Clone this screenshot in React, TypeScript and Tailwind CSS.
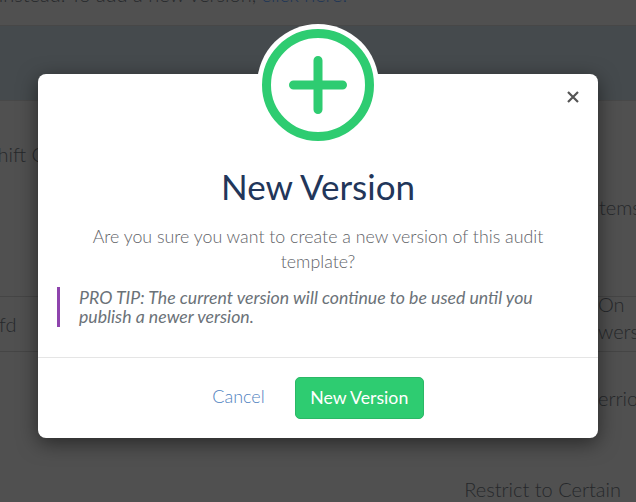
export default function App() {
  return (
    <div className="relative w-[636px] h-[502px] overflow-hidden bg-[#505050] font-['Lato',sans-serif] text-[20px] leading-[26px] text-[#26282b] font-light">
      <div className="h-[26px] border-b border-[#474747] overflow-hidden">
        <p className="mt-[-19px] whitespace-nowrap text-center w-[700px] ml-[-177px]">instead. To add a new version, <span className="text-[#1d3557]">click here.</span></p>
      </div>
      <div className="h-[75px] bg-[#454a4d] border-b border-[#484848]" />
      <div className="flex justify-between">
        <div className="flex flex-col w-full">
          <p className="pt-[40px] ml-[-13px] whitespace-nowrap">Shift Checklist</p>
          <div className="mt-[129px] h-[56px] border-y border-[#454545] flex items-center"><span className="ml-[-1px]">fd</span></div>
          <div className="mt-[124px] flex justify-end"><span className="mr-[15px] whitespace-nowrap">Restrict to Certain</span></div>
        </div>
      </div>

      <div className="absolute inset-0 flex justify-end pt-[194px] pointer-events-none">
        <div className="w-[38px] flex flex-col whitespace-nowrap">
          <span className="ml-[1px]">tems</span>
          <span className="mt-[71px]">On</span>
          <span className="mt-[1px]">wers</span>
          <span className="mt-[41px]">errio</span>
        </div>
      </div>

      <div className="absolute inset-0 flex justify-center items-start pt-[74px]">
        <div className="relative w-[560px] h-[364px] bg-white rounded-[8px] shadow-[0_5px_20px_rgba(0,0,0,0.5)] flex flex-col items-center">
          <div className="absolute left-1/2 -translate-x-1/2 top-[-50px] w-[122px] h-[122px] rounded-full bg-white flex items-center justify-center">
            <div className="w-[112px] h-[112px] rounded-full border-[9px] border-[#2ecc71] flex items-center justify-center">
              <svg width="58" height="58" viewBox="0 0 58 58" fill="none" stroke="#2ecc71" strokeWidth="9" strokeLinecap="round">
                <path d="M29 4.500v49M4.500 29h49" />
              </svg>
            </div>
          </div>
          <button className="absolute right-[17px] top-[15px]">
            <svg width="16" height="16" viewBox="0 0 16 16" fill="none" stroke="#555" strokeWidth="2.2">
              <path d="M3 3l10 10M13 3L3 13" />
            </svg>
          </button>
          <h2 className="mt-[92px] text-[35px] leading-[40px] font-normal text-[#22365a]">New Version</h2>
          <p className="mt-[18px] w-[470px] text-center text-[17.800px] leading-[25px] text-[#5f6368]">
            Are you sure you want to create a new version of this audit template?
          </p>
          <div className="mt-[13px] self-start ml-[19px] w-[500px] border-l-[3px] border-[#8e44ad] pl-[19px] pr-[10px] py-[1px] italic text-[17.700px] leading-[19px] text-[#6b7278] font-normal">
            PRO TIP: The current version will continue to be used until you publish a newer version.
          </div>
          <div className="mt-[30px] w-full border-t border-[#e5e5e5] flex justify-center items-center gap-[30px] pt-[19px]">
            <span className="text-[18px] text-[#4f82c0] mt-[-4px]">Cancel</span>
            <button className="w-[129px] h-[42px] rounded-[5px] bg-[#2ecc71] border border-[#2bb866] text-white text-[17.700px] font-normal">New Version</button>
          </div>
        </div>
      </div>
    </div>
  );
}
